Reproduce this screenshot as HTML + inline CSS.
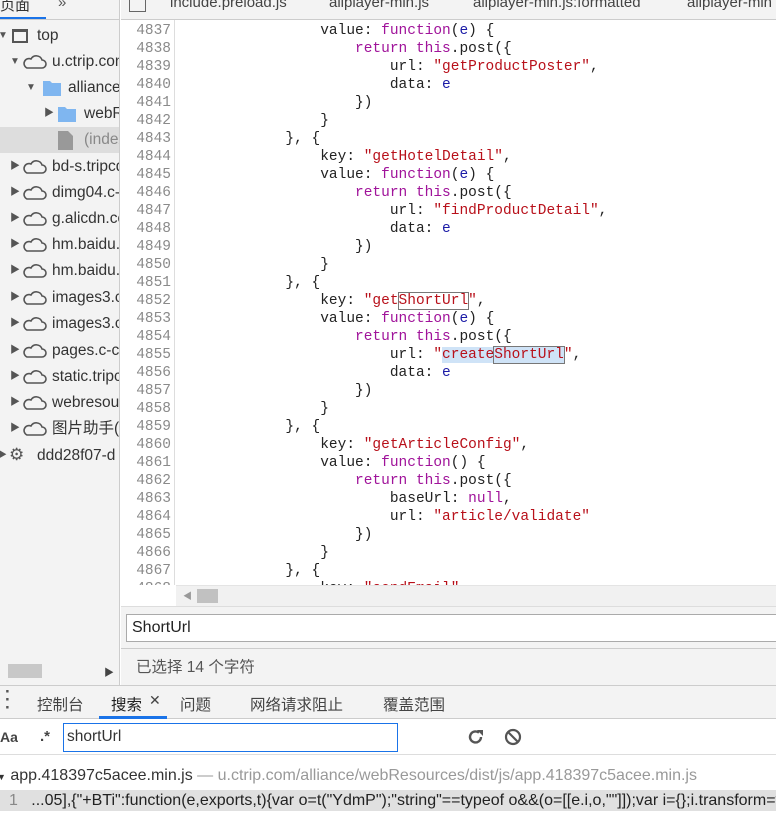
<!DOCTYPE html>
<html><head><meta charset="utf-8"><style>
*{margin:0;padding:0;box-sizing:border-box}
body{width:776px;height:818px;overflow:hidden;background:#fff;font-family:"Liberation Sans","Noto Sans CJK SC",sans-serif;position:relative;color:#333}
.abs{position:absolute}
#side{left:0;top:0;width:120px;height:685px;background:#f3f3f3;border-right:1px solid #ccc;overflow:hidden}
.row{position:absolute;left:0;height:26px;line-height:26px;font-size:15.5px;white-space:nowrap;color:#333}
.tri{position:absolute;font-size:10px;color:#555}
#tabs{left:121px;top:0;width:655px;height:20px;background:#f3f3f3;border-bottom:1px solid #ccc;font-size:15px;color:#444;white-space:nowrap;overflow:hidden}
#gut{left:121px;top:20px;width:54px;height:565px;border-right:1px solid #ddd;background:#fff}
.k{color:#a0139a}.s{color:#b8101a}.v{color:#1a1aa6}
.hb{outline:1px solid #777;background:#fff}
.sel{background:#cfe3f7}
</style></head><body>
<div id="side" class="abs">
 <div class="abs" style="left:0;top:-6px;font-size:15px;">页面</div>
 <div class="abs" style="left:58px;top:-6px;font-size:15px;color:#555">»</div>
 <div class="abs" style="left:0;top:17px;width:46px;height:2px;background:#1a73e8"></div>
 <div class="abs" style="left:0;top:19px;width:120px;height:1px;background:#ccc"></div>
 <div class="row" style="top:23px"><span class="tri" style="left:-2px;top:0">▼</span><span class="abs" style="left:12px;top:6px;width:16px;height:14px;border:2px solid #555;border-top-width:3px"></span><span class="abs" style="left:37px">top</span></div>
 <div class="row" style="top:49px"><span class="tri" style="left:10px">▼</span><svg class="abs" style="left:23px;top:6px" width="24" height="14"><path d="M4 13h15a4 4 0 0 0 0-8 6 6 0 0 0-11-1 4.5 4.5 0 0 0-4 9z" fill="none" stroke="#555" stroke-width="1.6"/></svg><span class="abs" style="left:52px">u.ctrip.com</span></div>
 <div class="row" style="top:75px"><span class="tri" style="left:26px">▼</span><svg class="abs" style="left:43px;top:5px" width="18" height="16"><path d="M0 1h7l2 2h9v13H0z" fill="#7fb6f0"/></svg><span class="abs" style="left:68px">alliance</span></div>
 <div class="row" style="top:101px"><span class="tri" style="left:44px">▶</span><svg class="abs" style="left:58px;top:5px" width="18" height="16"><path d="M0 1h7l2 2h9v13H0z" fill="#7fb6f0"/></svg><span class="abs" style="left:84px">webResources</span></div>
 <div class="row" style="top:127px;width:120px;background:#ddd"><svg class="abs" style="left:58px;top:4px" width="16" height="19"><path d="M0 0h10l5 5v14H0z" fill="#999"/></svg><span class="abs" style="left:84px;color:#888">(index)</span></div>
 <div class="row" style="top:154px"><span class="tri" style="left:10px">▶</span><svg class="abs" style="left:23px;top:6px" width="24" height="14"><path d="M4 13h15a4 4 0 0 0 0-8 6 6 0 0 0-11-1 4.5 4.5 0 0 0-4 9z" fill="none" stroke="#555" stroke-width="1.6"/></svg><span class="abs" style="left:52px">bd-s.tripcdn</span></div>
 <div class="row" style="top:180px"><span class="tri" style="left:10px">▶</span><svg class="abs" style="left:23px;top:6px" width="24" height="14"><path d="M4 13h15a4 4 0 0 0 0-8 6 6 0 0 0-11-1 4.5 4.5 0 0 0-4 9z" fill="none" stroke="#555" stroke-width="1.6"/></svg><span class="abs" style="left:52px">dimg04.c-ctrip</span></div>
 <div class="row" style="top:206px"><span class="tri" style="left:10px">▶</span><svg class="abs" style="left:23px;top:6px" width="24" height="14"><path d="M4 13h15a4 4 0 0 0 0-8 6 6 0 0 0-11-1 4.5 4.5 0 0 0-4 9z" fill="none" stroke="#555" stroke-width="1.6"/></svg><span class="abs" style="left:52px">g.alicdn.com</span></div>
 <div class="row" style="top:232px"><span class="tri" style="left:10px">▶</span><svg class="abs" style="left:23px;top:6px" width="24" height="14"><path d="M4 13h15a4 4 0 0 0 0-8 6 6 0 0 0-11-1 4.5 4.5 0 0 0-4 9z" fill="none" stroke="#555" stroke-width="1.6"/></svg><span class="abs" style="left:52px">hm.baidu.com</span></div>
 <div class="row" style="top:258px"><span class="tri" style="left:10px">▶</span><svg class="abs" style="left:23px;top:6px" width="24" height="14"><path d="M4 13h15a4 4 0 0 0 0-8 6 6 0 0 0-11-1 4.5 4.5 0 0 0-4 9z" fill="none" stroke="#555" stroke-width="1.6"/></svg><span class="abs" style="left:52px">hm.baidu.com</span></div>
 <div class="row" style="top:285px"><span class="tri" style="left:10px">▶</span><svg class="abs" style="left:23px;top:6px" width="24" height="14"><path d="M4 13h15a4 4 0 0 0 0-8 6 6 0 0 0-11-1 4.5 4.5 0 0 0-4 9z" fill="none" stroke="#555" stroke-width="1.6"/></svg><span class="abs" style="left:52px">images3.c-ctrip</span></div>
 <div class="row" style="top:311px"><span class="tri" style="left:10px">▶</span><svg class="abs" style="left:23px;top:6px" width="24" height="14"><path d="M4 13h15a4 4 0 0 0 0-8 6 6 0 0 0-11-1 4.5 4.5 0 0 0-4 9z" fill="none" stroke="#555" stroke-width="1.6"/></svg><span class="abs" style="left:52px">images3.c-ctrip</span></div>
 <div class="row" style="top:338px"><span class="tri" style="left:10px">▶</span><svg class="abs" style="left:23px;top:6px" width="24" height="14"><path d="M4 13h15a4 4 0 0 0 0-8 6 6 0 0 0-11-1 4.5 4.5 0 0 0-4 9z" fill="none" stroke="#555" stroke-width="1.6"/></svg><span class="abs" style="left:52px">pages.c-ctrip</span></div>
 <div class="row" style="top:364px"><span class="tri" style="left:10px">▶</span><svg class="abs" style="left:23px;top:6px" width="24" height="14"><path d="M4 13h15a4 4 0 0 0 0-8 6 6 0 0 0-11-1 4.5 4.5 0 0 0-4 9z" fill="none" stroke="#555" stroke-width="1.6"/></svg><span class="abs" style="left:52px">static.tripcdn</span></div>
 <div class="row" style="top:390px"><span class="tri" style="left:10px">▶</span><svg class="abs" style="left:23px;top:6px" width="24" height="14"><path d="M4 13h15a4 4 0 0 0 0-8 6 6 0 0 0-11-1 4.5 4.5 0 0 0-4 9z" fill="none" stroke="#555" stroke-width="1.6"/></svg><span class="abs" style="left:52px">webresource</span></div>
 <div class="row" style="top:416px"><span class="tri" style="left:10px">▶</span><svg class="abs" style="left:23px;top:6px" width="24" height="14"><path d="M4 13h15a4 4 0 0 0 0-8 6 6 0 0 0-11-1 4.5 4.5 0 0 0-4 9z" fill="none" stroke="#555" stroke-width="1.6"/></svg><span class="abs" style="left:52px">图片助手(</span></div>
 <div class="row" style="top:443px"><span class="tri" style="left:-3px">▶</span><span class="abs" style="left:9px;top:-1px;font-size:17px;color:#555">⚙</span><span class="abs" style="left:37px">ddd28f07-d</span></div>
 <div class="abs" style="left:8px;top:664px;width:34px;height:14px;background:#c8c8c8"></div>
 <div class="abs" style="left:104px;top:664px;font-size:10px;color:#444">▶</div>
</div>
<div id="tabs" class="abs">
 <span class="abs" style="left:8px;top:-4px;width:17px;height:16px;border:1.5px solid #666;border-top:none"></span>
 <span class="abs" style="left:49px;top:-6px">include.preload.js</span>
 <span class="abs" style="left:208px;top:-6px">aliplayer-min.js</span>
 <span class="abs" style="left:352px;top:-6px">aliplayer-min.js:formatted</span>
 <span class="abs" style="left:566px;top:-6px">aliplayer-min</span>
</div>
<div id="gut" class="abs"></div>
<div class="abs" style="left:121px;top:22px;width:50px;font:14.5px 'Liberation Mono',monospace;color:#8a8a8a;line-height:18px;text-align:right;white-space:pre">4837
4838
4839
4840
4841
4842
4843
4844
4845
4846
4847
4848
4849
4850
4851
4852
4853
4854
4855
4856
4857
4858
4859
4860
4861
4862
4863
4864
4865
4866
4867
4868
4869</div>
<div class="abs" style="left:181px;top:22px;font:14.5px 'Liberation Mono',monospace;color:#222;line-height:18px;white-space:pre">                value: <span class="k">function</span>(<span class="v">e</span>) {
                    <span class="k">return</span> <span class="k">this</span>.post({
                        url: <span class="s">"getProductPoster"</span>,
                        data: <span class="v">e</span>
                    })
                }
            }, {
                key: <span class="s">"getHotelDetail"</span>,
                value: <span class="k">function</span>(<span class="v">e</span>) {
                    <span class="k">return</span> <span class="k">this</span>.post({
                        url: <span class="s">"findProductDetail"</span>,
                        data: <span class="v">e</span>
                    })
                }
            }, {
                key: <span class="s">"get<span class="hb">ShortUrl</span>"</span>,
                value: <span class="k">function</span>(<span class="v">e</span>) {
                    <span class="k">return</span> <span class="k">this</span>.post({
                        url: <span class="s">"<span class="sel">create</span><span class="hb sel">ShortUrl</span>"</span>,
                        data: <span class="v">e</span>
                    })
                }
            }, {
                key: <span class="s">"getArticleConfig"</span>,
                value: <span class="k">function</span>() {
                    <span class="k">return</span> <span class="k">this</span>.post({
                        baseUrl: <span class="k">null</span>,
                        url: <span class="s">"article/validate"</span>
                    })
                }
            }, {
                key: <span class="s">"sendEmail"</span>,</div>
<div class="abs" style="left:121px;top:585px;width:655px;height:22px;background:#fff"></div>
<div class="abs" style="left:176px;top:585px;width:600px;height:21px;background:#f1f1f1;border-top:1px solid #e4e4e4"></div>
<div class="abs" style="left:183px;top:589px;font-size:9px;color:#999">◀</div>
<div class="abs" style="left:197px;top:589px;width:21px;height:14px;background:#c1c1c1"></div>
<div class="abs" style="left:121px;top:606px;width:655px;height:42px;background:#f3f3f3;border-top:1px solid #ddd"></div>
<div class="abs" style="left:126px;top:614px;width:660px;height:28px;background:#fff;border:1px solid #aaa;font-size:16px;line-height:26px;padding-left:5px;color:#222">ShortUrl</div>
<div class="abs" style="left:121px;top:648px;width:655px;height:37px;background:#f3f3f3;border-top:1px solid #ccc;font-size:15.5px;line-height:37px;padding-left:15px;color:#555">已选择 14 个字符</div>
<div class="abs" style="left:0;top:685px;width:776px;height:34px;background:#f3f3f3;border-top:1px solid #ccc;border-bottom:1px solid #ccc;font-size:15.5px;color:#444;white-space:nowrap">
 <span class="abs" style="left:5px;top:2px;font-size:17px;font-weight:bold;color:#555;line-height:8px">·<br>·<br>·</span>
 <span class="abs" style="left:37px;top:7px">控制台</span>
 <span class="abs" style="left:111px;top:7px;color:#222">搜索</span><span class="abs" style="left:149px;top:6px;font-size:14px">✕</span>
 <span class="abs" style="left:99px;top:30px;width:68px;height:3px;background:#1a73e8"></span>
 <span class="abs" style="left:180px;top:7px">问题</span>
 <span class="abs" style="left:250px;top:7px">网络请求阻止</span>
 <span class="abs" style="left:383px;top:7px">覆盖范围</span>
</div>
<div class="abs" style="left:0;top:719px;width:776px;height:36px;background:#fff;border-bottom:1px solid #ddd"></div>
<div class="abs" style="left:0;top:729px;font-size:14px;font-weight:bold;color:#444">Aa</div>
<div class="abs" style="left:40px;top:728px;font-size:15px;font-weight:bold;color:#444">.*</div>
<div class="abs" style="left:63px;top:723px;width:335px;height:29px;border:1.5px solid #1a73e8;font-size:15.5px;line-height:26px;padding-left:3px;color:#333">shortUrl</div>
<svg class="abs" style="left:466px;top:727px" width="20" height="20" viewBox="0 0 20 20"><path d="M15 10a5.5 5.5 0 1 1-2-4.3" fill="none" stroke="#555" stroke-width="2.4"/><path d="M11 3h6v6z" fill="#555"/></svg>
<svg class="abs" style="left:504px;top:728px" width="18" height="18" viewBox="0 0 18 18"><circle cx="9" cy="9" r="7" fill="none" stroke="#555" stroke-width="2.2"/><path d="M4 4l10 10" stroke="#555" stroke-width="2.2"/></svg>
<div class="abs" style="left:-3px;top:767px;font-size:16px;white-space:nowrap;color:#333"><span style="font-size:9px">▼</span> app.418397c5acee.min.js <span style="color:#999">— u.ctrip.com/alliance/webResources/dist/js/app.418397c5acee.min.js</span></div>
<div class="abs" style="left:0;top:790px;width:776px;height:21px;background:#e0e0e0;font-size:16px;line-height:21px;white-space:nowrap;overflow:hidden;color:#222"><span style="color:#888;padding-left:9px">1</span>&nbsp;&nbsp;&nbsp;...05],{"+BTi":function(e,exports,t){var o=t("YdmP");"string"==typeof o&amp;&amp;(o=[[e.i,o,""]]);var i={};i.transform=void</div>
</body></html>
